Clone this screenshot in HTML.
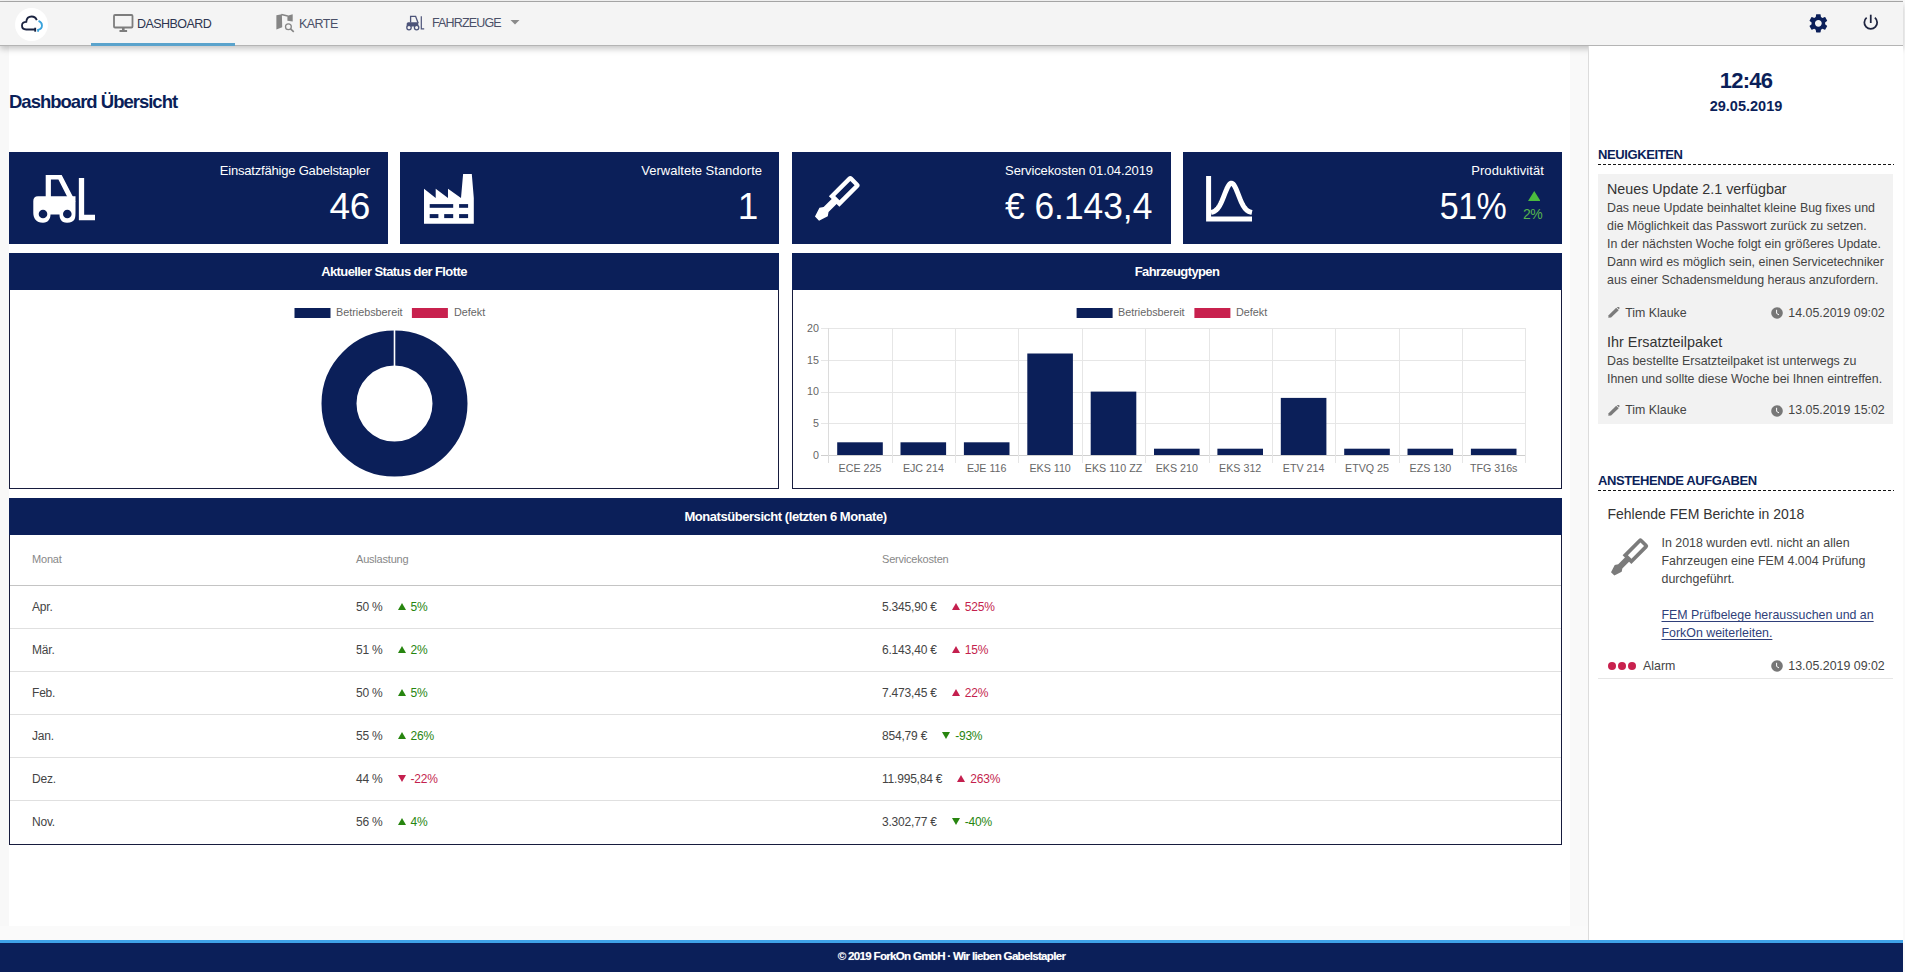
<!DOCTYPE html>
<html><head><meta charset="utf-8">
<style>
*{box-sizing:border-box;margin:0;padding:0}
html,body{width:1905px;height:972px;overflow:hidden;background:#f8f8f8;font-family:"Liberation Sans",sans-serif;position:relative}
.abs{position:absolute}
svg{display:block}
#topline{left:0;top:0;width:1905px;height:2px;background:#f2f2f2;border-bottom:1px solid #a9a9a9}
#nav{left:0;top:2px;width:1903px;height:44px;background:#f4f4f4;border-bottom:1px solid #b4b4b4;z-index:3;box-shadow:0 3px 6px rgba(0,0,0,.22)}
#main{left:9px;top:45px;width:1561px;height:881px;background:#fff}
#gutter{left:1570px;top:45px;width:18px;height:895px;background:#f9f9f9}
#side{left:1588px;top:46px;width:315px;height:894px;background:#fff;border-left:1px solid #dcdcdc;z-index:4}
#footer{left:0;top:940px;width:1903px;height:32px;background:#0b1f59;border-top:3px solid #3fa2e8;z-index:5;color:#fff;font-weight:bold;font-size:11.6px;letter-spacing:-0.72px;text-align:center;line-height:26px;text-shadow:0 0 1px rgba(255,255,255,.4)}
.navtxt{position:absolute;font-size:12.5px;color:#2d3550;letter-spacing:-0.55px;white-space:nowrap;top:14px;line-height:16px}
.kpi{position:absolute;top:152px;height:92px;width:379px;background:#0b1f59;color:#fff}
.kpi .lbl{position:absolute;right:18px;top:11px;font-size:13px;letter-spacing:-0.2px;white-space:nowrap;line-height:16px}
.kpi .val{position:absolute;right:18px;top:35px;font-size:37px;white-space:nowrap;line-height:40px;letter-spacing:-0.3px}
.kpi svg{position:absolute}
.panel{position:absolute;border:1px solid #171c3e;background:#fff}
.phead{position:absolute;left:-1px;top:-1px;right:-1px;height:37px;background:#0b1f59;color:#fff;font-weight:bold;font-size:13px;letter-spacing:-0.6px;text-align:center;line-height:37px;white-space:nowrap}
.row{position:absolute;left:0;width:100%;height:43px;border-top:1px solid #e0e0e0}
.cell{position:absolute;font-size:12px;color:#444;white-space:nowrap;line-height:14px;top:14px;letter-spacing:-0.2px}
.tri{display:inline-block;width:0;height:0;border-left:4px solid transparent;border-right:4px solid transparent;vertical-align:1px;margin-right:5px}
.tri.u{border-bottom:7px solid currentColor}
.tri.d{border-top:7px solid currentColor}
.hd{font-size:11px;color:#888}
.gap{display:inline-block;width:15px}
.up{color:#27850f}
.dn{color:#c41f4e}
.sh{position:absolute;left:9px;width:296px;font-weight:bold;font-size:13px;color:#0b1f59;letter-spacing:-0.4px;line-height:16px}
.dash{position:absolute;left:9px;width:296px;height:1px;background:repeating-linear-gradient(90deg,#151515 0 3px,transparent 3px 5px)}
.st{position:absolute;white-space:nowrap;color:#333}
</style></head>
<body>
<div id="topline" class="abs"></div>
<div id="nav" class="abs">
  <!-- logo -->
  <div class="abs" style="left:15px;top:6px;width:33px;height:33px;border-radius:50%;background:#fff"></div>
  <svg class="abs" style="left:19px;top:10px" width="28" height="26" viewBox="0 0 28 26"><g transform="translate(0.5,-0.2) scale(1.075)">
    <path d="M14.5 16.5 H6.2 C3.2 16.5 2.3 14.6 2.3 12.8 C2.3 10.6 4 9.3 6.3 9.3 C6.6 5.8 9 4.4 11.3 4.4 C13.6 4.4 15.3 5.8 16.1 7.7" fill="none" stroke="#1b2340" stroke-width="1.7"/>
    <path d="M14.6 14.8 V18.5" stroke="#1b2340" stroke-width="1.7"/>
    <path d="M17.7 8.5 C20.2 9.5 20.9 11.2 20.9 12.7 C20.9 14.6 19.7 16.3 17.3 16.8 V18.5" fill="none" stroke="#3aa3dc" stroke-width="1.7"/></g>
  </svg>
  <!-- dashboard tab -->
  <svg class="abs" style="left:113px;top:12px" width="21" height="19" viewBox="0 0 21 19">
    <rect x="1" y="1" width="18.5" height="12.5" rx="1" fill="none" stroke="#7d7d7d" stroke-width="1.8"/>
    <rect x="9" y="13.5" width="2.6" height="3" fill="#7d7d7d"/>
    <rect x="6.5" y="16" width="7.6" height="2" fill="#7d7d7d"/>
  </svg>
  <div class="navtxt" style="left:137px">DASHBOARD</div>
  <div class="abs" style="left:91px;top:41px;width:144px;height:3px;background:#5aa3cc"></div>
  <!-- karte -->
  <svg class="abs" style="left:272px;top:8px" width="26" height="26" viewBox="0 0 26 26">
    <path d="M4.4 5.2 L9.9 4.3 L10.2 17.2 L4.4 19.6 Z" fill="#858585"/>
    <path d="M9.4 4.5 L15.8 5.9" stroke="#858585" stroke-width="1.5"/>
    <path d="M15.4 5.8 L20.7 4.3 L20.7 11.6 L15.4 10.8 Z" fill="#858585"/>
    <circle cx="16.4" cy="16.7" r="2.9" fill="none" stroke="#858585" stroke-width="1.3"/>
    <path d="M18.5 18.9 L21.8 21.9" stroke="#858585" stroke-width="1.6"/>
  </svg>
  <div class="navtxt" style="left:299px;color:#4a5068">KARTE</div>
  <!-- fahrzeuge -->
  <svg class="abs" style="left:405px;top:11px" width="22" height="19" viewBox="0 0 22 19">
    <path d="M5.6 9.5 V3.3 H10.6 L13.1 10" fill="none" stroke="#4d5479" stroke-width="1.3"/>
    <path d="M3.3 9.2 H13.3 V13.4 H1.7 V10.8 Q1.7 9.2 3.3 9.2 Z" fill="#4d5479"/>
    <circle cx="4" cy="14.6" r="2.2" fill="#f4f4f4" stroke="#4d5479" stroke-width="1.3"/>
    <circle cx="11.6" cy="14.6" r="2.2" fill="#f4f4f4" stroke="#4d5479" stroke-width="1.3"/>
    <path d="M16.3 3.2 V15.8 H19.2" fill="none" stroke="#4d5479" stroke-width="1.2"/>
  </svg>
  <div class="navtxt" style="left:432px;color:#4a5068;letter-spacing:-0.85px;top:13px">FAHRZEUGE</div>
  <svg class="abs" style="left:510px;top:18px" width="10" height="5" viewBox="0 0 10 5"><path d="M0.5 0 H9.5 L5 4.5 Z" fill="#8a8a8a"/></svg>
  <!-- gear -->
  <svg class="abs" style="left:1807.2px;top:9.7px" width="22.7" height="22.7" viewBox="0 0 24 24">
    <path fill="#0b1f59" d="M19.14 12.94c.04-.3.06-.61.06-.94 0-.32-.02-.64-.07-.94l2.03-1.58c.18-.14.23-.41.12-.61l-1.92-3.32c-.12-.22-.37-.29-.59-.22l-2.39.96c-.5-.38-1.03-.7-1.62-.94l-.36-2.54c-.04-.24-.24-.41-.48-.41h-3.84c-.24 0-.43.17-.47.41l-.36 2.54c-.59.24-1.13.57-1.62.94l-2.39-.96c-.22-.08-.47 0-.59.22L2.74 8.87c-.12.21-.08.47.12.61l2.03 1.58c-.05.3-.09.63-.09.94s.02.64.07.94l-2.03 1.58c-.18.14-.23.41-.12.61l1.92 3.32c.12.22.37.29.59.22l2.39-.96c.5.38 1.03.7 1.62.94l.36 2.54c.05.24.24.41.48.41h3.84c.24 0 .44-.17.47-.41l.36-2.54c.59-.24 1.13-.56 1.62-.94l2.39.96c.22.08.47 0 .59-.22l1.92-3.32c.12-.22.07-.47-.12-.61l-2.01-1.58zM12 15.6c-1.98 0-3.6-1.62-3.6-3.6s1.62-3.6 3.6-3.6 3.6 1.62 3.6 3.6-1.62 3.6-3.6 3.6z"/>
  </svg>
  <!-- power -->
  <svg class="abs" style="left:1861px;top:11px" width="19" height="19" viewBox="0 0 19 19">
    <path d="M5.64 4.65 A6.4 6.4 0 1 0 13.86 4.65" fill="none" stroke="#1e2440" stroke-width="1.75"/>
    <path d="M9.75 1.7 V10" stroke="#1e2440" stroke-width="1.75"/>
  </svg>
</div>
<div id="main" class="abs"></div>
<div id="gutter" class="abs"></div>
<div class="abs" style="left:0;top:926px;width:1588px;height:14px;background:#fafafa"></div>
<div class="abs" style="left:1903px;top:0;width:2px;height:972px;background:#fafafa"></div>

<!-- Title -->
<div class="abs" style="left:9px;top:92px;font-size:18.5px;font-weight:bold;color:#0b1f59;letter-spacing:-1px;white-space:nowrap;line-height:20px">Dashboard Übersicht</div>

<!-- KPI cards -->
<div class="kpi" style="left:9px">
  <svg style="left:24px;top:23px" width="64" height="50" viewBox="0 0 64 50">
    <path d="M12.7 24 V0 H28.7 L42.5 26.7 H36.8 L25.4 4.5 H17.9 V24 Z" fill="#fff"/>
    <path d="M5 21.2 H42.5 V36.5 C42.5 43 42.5 47.7 34 47.7 C28 47.7 26.5 43.5 26.5 39.5 H17.5 C17.5 43.5 15.5 47.7 10 47.7 C3 47.7 0.3 43 0.3 38 V26 C0.3 23 2 21.2 5 21.2 Z" fill="#fff"/>
    <circle cx="10" cy="39" r="4.3" fill="#0b1f59"/>
    <circle cx="34.3" cy="39" r="4.3" fill="#0b1f59"/>
    <path d="M48.5 3 V42.5 H62" fill="none" stroke="#fff" stroke-width="5.3"/>
  </svg>
  <div class="lbl">Einsatzfähige Gabelstapler</div>
  <div class="val">46</div>
</div>
<div class="kpi" style="left:400px">
  <svg style="left:24px;top:22px" width="52" height="52" viewBox="0 0 52 52">
    <path d="M0 14.7 L11.7 24 V14.7 L24 24 V14.7 L37 24 L39.1 0 H47.8 L49.8 24 V49.8 H0 Z" fill="#fff"/>
    <rect x="5.7" y="30.1" width="23.5" height="3.7" fill="#0b1f59"/>
    <rect x="35.1" y="30.1" width="9" height="3.7" fill="#0b1f59"/>
    <rect x="5.7" y="40.1" width="8.7" height="4" fill="#0b1f59"/>
    <rect x="20.2" y="40.1" width="9" height="4" fill="#0b1f59"/>
    <rect x="35.1" y="40.1" width="9" height="4" fill="#0b1f59"/>
  </svg>
  <div class="lbl" style="letter-spacing:0px;right:17px">Verwaltete Standorte</div>
  <div class="val" style="right:21px">1</div>
</div>
<div class="kpi" style="left:792px">
  <svg style="left:21px;top:22px" width="50" height="50" viewBox="0 0 50 50">
    <g transform="translate(4,44.6) rotate(-45) scale(1.2)"><path fill-rule="evenodd" d="M0 -2.4 L7.8 -4.9 L10.7 -2.9 L20.2 -2.9 L20.2 -6.2 L42.8 -6.2 Q45.4 -6.2 45.4 -3.6 L45.4 3.6 Q45.4 6.2 42.8 6.2 L20.2 6.2 L20.2 2.9 L10.7 2.9 L7.8 4.9 L0 2.4 Z M24 -2.5 V2.5 H41.8 V-2.5 Z" fill="#fff"/></g>
  </svg>
  <div class="lbl" style="letter-spacing:-0.1px">Servicekosten 01.04.2019</div>
  <div class="val" style="right:19px;letter-spacing:0px;transform:scaleX(.955);transform-origin:100% 50%">€ 6.143,4</div>
</div>
<div class="kpi" style="left:1183px">
  <svg style="left:20px;top:22px" width="52" height="52" viewBox="0 0 52 52">
    <path d="M5.6 2 V45 H49" fill="none" stroke="#fff" stroke-width="5"/>
    <path d="M8.00 38.38 L8.68 38.24 L9.37 38.07 L10.05 37.85 L10.73 37.57 L11.42 37.24 L12.10 36.83 L12.78 36.34 L13.47 35.76 L14.15 35.07 L14.83 34.27 L15.52 33.36 L16.20 32.32 L16.88 31.15 L17.57 29.86 L18.25 28.45 L18.93 26.94 L19.62 25.33 L20.30 23.65 L20.98 21.91 L21.67 20.16 L22.35 18.43 L23.03 16.74 L23.72 15.14 L24.40 13.66 L25.08 12.34 L25.77 11.22 L26.45 10.33 L27.13 9.68 L27.82 9.30 L28.50 9.20 L29.18 9.38 L29.87 9.84 L30.55 10.56 L31.23 11.53 L31.92 12.71 L32.60 14.08 L33.28 15.59 L33.97 17.22 L34.65 18.93 L35.33 20.68 L36.02 22.42 L36.70 24.14 L37.38 25.81 L38.07 27.39 L38.75 28.88 L39.43 30.25 L40.12 31.51 L40.80 32.64 L41.48 33.64 L42.17 34.52 L42.85 35.28 L43.53 35.94 L44.22 36.50 L44.90 36.96 L45.58 37.35 L46.27 37.66 L46.95 37.92 L47.63 38.12 L48.32 38.28 L49.00 38.41" fill="none" stroke="#fff" stroke-width="5" stroke-linejoin="round"/>
  </svg>
  <div class="lbl" style="letter-spacing:0.1px">Produktivität</div>
  <div class="val" style="right:56px;top:35px;letter-spacing:-0.6px;transform:scaleX(.92);transform-origin:100% 50%">51%</div>
  <svg style="left:344.5px;top:39px" width="12.5" height="10" viewBox="0 0 12.5 10"><path d="M0 10 L6.25 0 L12.5 10 Z" fill="#4cbb3f"/></svg>
  <div class="abs" style="left:340px;top:53.5px;font-size:14px;color:#55b34d;line-height:16px;letter-spacing:-0.6px">2%</div>
</div>

<!-- Donut panel -->
<div class="panel" style="left:9px;top:253px;width:770px;height:236px">
  <div class="phead">Aktueller Status der Flotte</div>
  <svg class="abs" style="left:-1px;top:-1px" width="770" height="236" viewBox="0 0 770 236">
    <rect x="285.5" y="55" width="36" height="10" fill="#0b1f59"/>
    <text x="327" y="62.5" font-size="10.8" fill="#666">Betriebsbereit</text>
    <rect x="402.9" y="55" width="36" height="10" fill="#c8214e"/>
    <text x="445" y="62.5" font-size="10.8" fill="#666">Defekt</text>
    <circle cx="385.5" cy="150.6" r="55.5" fill="none" stroke="#0b1f59" stroke-width="35"/>
    <line x1="385.5" y1="76.5" x2="385.5" y2="113" stroke="#fff" stroke-width="1.6"/>
  </svg>
</div>

<!-- Bar panel -->
<div class="panel" style="left:792px;top:253px;width:770px;height:236px">
  <div class="phead">Fahrzeugtypen</div>
  <svg class="abs" style="left:-1px;top:-1px" width="770" height="236" viewBox="0 0 770 236" id="bars">
    <rect x="284.6" y="55" width="36" height="10" fill="#0b1f59"/>
    <text x="326.0" y="62.5" font-size="10.8" fill="#666">Betriebsbereit</text>
    <rect x="402.4" y="55" width="36" height="10" fill="#c8214e"/>
    <text x="444.0" y="62.5" font-size="10.8" fill="#666">Defekt</text>
    <line x1="29" y1="75.5" x2="733.4" y2="75.5" stroke="#e6e6e6" stroke-width="1"/>
    <text x="27" y="78.9" font-size="10.7" fill="#666" text-anchor="end">20</text>
    <line x1="29" y1="107.5" x2="733.4" y2="107.5" stroke="#e6e6e6" stroke-width="1"/>
    <text x="27" y="110.6" font-size="10.7" fill="#666" text-anchor="end">15</text>
    <line x1="29" y1="139.5" x2="733.4" y2="139.5" stroke="#e6e6e6" stroke-width="1"/>
    <text x="27" y="142.4" font-size="10.7" fill="#666" text-anchor="end">10</text>
    <line x1="29" y1="170.5" x2="733.4" y2="170.5" stroke="#e6e6e6" stroke-width="1"/>
    <text x="27" y="174.1" font-size="10.7" fill="#666" text-anchor="end">5</text>
    <line x1="29" y1="202.5" x2="733.4" y2="202.5" stroke="#cfcfcf" stroke-width="1"/>
    <text x="27" y="205.8" font-size="10.7" fill="#666" text-anchor="end">0</text>
    <line x1="36.5" y1="75.1" x2="36.5" y2="210" stroke="#dcdcdc" stroke-width="1"/>
    <line x1="100.5" y1="75.1" x2="100.5" y2="210" stroke="#e6e6e6" stroke-width="1"/>
    <line x1="163.5" y1="75.1" x2="163.5" y2="210" stroke="#e6e6e6" stroke-width="1"/>
    <line x1="226.5" y1="75.1" x2="226.5" y2="210" stroke="#e6e6e6" stroke-width="1"/>
    <line x1="290.5" y1="75.1" x2="290.5" y2="210" stroke="#e6e6e6" stroke-width="1"/>
    <line x1="353.5" y1="75.1" x2="353.5" y2="210" stroke="#e6e6e6" stroke-width="1"/>
    <line x1="417.5" y1="75.1" x2="417.5" y2="210" stroke="#e6e6e6" stroke-width="1"/>
    <line x1="480.5" y1="75.1" x2="480.5" y2="210" stroke="#e6e6e6" stroke-width="1"/>
    <line x1="543.5" y1="75.1" x2="543.5" y2="210" stroke="#e6e6e6" stroke-width="1"/>
    <line x1="607.5" y1="75.1" x2="607.5" y2="210" stroke="#e6e6e6" stroke-width="1"/>
    <line x1="670.5" y1="75.1" x2="670.5" y2="210" stroke="#e6e6e6" stroke-width="1"/>
    <line x1="733.5" y1="75.1" x2="733.5" y2="210" stroke="#e6e6e6" stroke-width="1"/>
    <rect x="45.2" y="189.3" width="45.6" height="12.7" fill="#0b1f59"/>
    <text x="68.0" y="218.8" font-size="10.7" fill="#666" text-anchor="middle">ECE 225</text>
    <rect x="108.5" y="189.3" width="45.6" height="12.7" fill="#0b1f59"/>
    <text x="131.4" y="218.8" font-size="10.7" fill="#666" text-anchor="middle">EJC 214</text>
    <rect x="171.9" y="189.3" width="45.6" height="12.7" fill="#0b1f59"/>
    <text x="194.7" y="218.8" font-size="10.7" fill="#666" text-anchor="middle">EJE 116</text>
    <rect x="235.3" y="100.5" width="45.6" height="101.5" fill="#0b1f59"/>
    <text x="258.1" y="218.8" font-size="10.7" fill="#666" text-anchor="middle">EKS 110</text>
    <rect x="298.7" y="138.6" width="45.6" height="63.4" fill="#0b1f59"/>
    <text x="321.5" y="218.8" font-size="10.7" fill="#666" text-anchor="middle">EKS 110 ZZ</text>
    <rect x="362.0" y="195.7" width="45.6" height="6.3" fill="#0b1f59"/>
    <text x="384.8" y="218.8" font-size="10.7" fill="#666" text-anchor="middle">EKS 210</text>
    <rect x="425.4" y="195.7" width="45.6" height="6.3" fill="#0b1f59"/>
    <text x="448.2" y="218.8" font-size="10.7" fill="#666" text-anchor="middle">EKS 312</text>
    <rect x="488.8" y="144.9" width="45.6" height="57.1" fill="#0b1f59"/>
    <text x="511.6" y="218.8" font-size="10.7" fill="#666" text-anchor="middle">ETV 214</text>
    <rect x="552.2" y="195.7" width="45.6" height="6.3" fill="#0b1f59"/>
    <text x="575.0" y="218.8" font-size="10.7" fill="#666" text-anchor="middle">ETVQ 25</text>
    <rect x="615.5" y="195.7" width="45.6" height="6.3" fill="#0b1f59"/>
    <text x="638.3" y="218.8" font-size="10.7" fill="#666" text-anchor="middle">EZS 130</text>
    <rect x="678.9" y="195.7" width="45.6" height="6.3" fill="#0b1f59"/>
    <text x="701.7" y="218.8" font-size="10.7" fill="#666" text-anchor="middle">TFG 316s</text>
  </svg>
</div>

<!-- Table panel -->
<div class="panel" style="left:9px;top:498px;width:1553px;height:347px">
  <div class="phead" style="letter-spacing:-0.45px">Monatsübersicht (letzten 6 Monate)</div>
  <div id="tbody">
  <div class="cell hd" style="left:22px;top:53px">Monat</div>
  <div class="cell hd" style="left:346px;top:53px">Auslastung</div>
  <div class="cell hd" style="left:872px;top:53px">Servicekosten</div>
  <div class="abs" style="left:0;top:86px;width:1551px;height:1px;background:#c4c4c4"></div>
  <div class="cell" style="left:22px;top:101px">Apr.</div>
  <div class="cell" style="left:346px;top:101px">50 %<span class="gap"></span><span class="up"><i class="tri u"></i>5%</span></div>
  <div class="cell" style="left:872px;top:101px">5.345,90 €<span class="gap"></span><span class="dn"><i class="tri u"></i>525%</span></div>
  <div class="abs" style="left:0;top:129px;width:1551px;height:1px;background:#e0e0e0"></div>
  <div class="cell" style="left:22px;top:144px">Mär.</div>
  <div class="cell" style="left:346px;top:144px">51 %<span class="gap"></span><span class="up"><i class="tri u"></i>2%</span></div>
  <div class="cell" style="left:872px;top:144px">6.143,40 €<span class="gap"></span><span class="dn"><i class="tri u"></i>15%</span></div>
  <div class="abs" style="left:0;top:172px;width:1551px;height:1px;background:#e0e0e0"></div>
  <div class="cell" style="left:22px;top:187px">Feb.</div>
  <div class="cell" style="left:346px;top:187px">50 %<span class="gap"></span><span class="up"><i class="tri u"></i>5%</span></div>
  <div class="cell" style="left:872px;top:187px">7.473,45 €<span class="gap"></span><span class="dn"><i class="tri u"></i>22%</span></div>
  <div class="abs" style="left:0;top:215px;width:1551px;height:1px;background:#e0e0e0"></div>
  <div class="cell" style="left:22px;top:230px">Jan.</div>
  <div class="cell" style="left:346px;top:230px">55 %<span class="gap"></span><span class="up"><i class="tri u"></i>26%</span></div>
  <div class="cell" style="left:872px;top:230px">854,79 €<span class="gap"></span><span class="up"><i class="tri d"></i>-93%</span></div>
  <div class="abs" style="left:0;top:258px;width:1551px;height:1px;background:#e0e0e0"></div>
  <div class="cell" style="left:22px;top:273px">Dez.</div>
  <div class="cell" style="left:346px;top:273px">44 %<span class="gap"></span><span class="dn"><i class="tri d"></i>-22%</span></div>
  <div class="cell" style="left:872px;top:273px">11.995,84 €<span class="gap"></span><span class="dn"><i class="tri u"></i>263%</span></div>
  <div class="abs" style="left:0;top:301px;width:1551px;height:1px;background:#e0e0e0"></div>
  <div class="cell" style="left:22px;top:316px">Nov.</div>
  <div class="cell" style="left:346px;top:316px">56 %<span class="gap"></span><span class="up"><i class="tri u"></i>4%</span></div>
  <div class="cell" style="left:872px;top:316px">3.302,77 €<span class="gap"></span><span class="up"><i class="tri d"></i>-40%</span></div>
  </div>
</div>

<div id="side" class="abs">
  <div class="abs" style="left:0;top:23px;width:314px;text-align:center;font-weight:bold;font-size:22px;color:#0b1f59;line-height:24px;letter-spacing:-0.8px">12:46</div>
  <div class="abs" style="left:0;top:52px;width:314px;text-align:center;font-weight:bold;font-size:14.5px;color:#0b1f59;line-height:16px;letter-spacing:0px">29.05.2019</div>
  <div class="sh" style="top:101px">NEUIGKEITEN</div>
  <div class="dash" style="top:118px"></div>
  <div id="news">
  <div class="abs" style="left:9px;top:128px;width:295px;height:250px;background:#f2f2f2"></div>
  <div class="st" style="left:18.0px;top:133.6px;font-size:14.3px;line-height:18px;color:#333;letter-spacing:0px;font-weight:normal;">Neues Update 2.1 verfügbar</div>
  <div class="st" style="left:18.0px;top:153.3px;font-size:12.4px;line-height:18px;color:#444;letter-spacing:0px;font-weight:normal;">Das neue Update beinhaltet kleine Bug fixes und</div>
  <div class="st" style="left:18.0px;top:171.3px;font-size:12.4px;line-height:18px;color:#444;letter-spacing:0px;font-weight:normal;">die Möglichkeit das Passwort zurück zu setzen.</div>
  <div class="st" style="left:18.0px;top:189.2px;font-size:12.4px;line-height:18px;color:#444;letter-spacing:0px;font-weight:normal;">In der nächsten Woche folgt ein größeres Update.</div>
  <div class="st" style="left:18.0px;top:207.2px;font-size:12.4px;line-height:18px;color:#444;letter-spacing:0px;font-weight:normal;">Dann wird es möglich sein, einen Servicetechniker</div>
  <div class="st" style="left:18.0px;top:225.1px;font-size:12.4px;line-height:18px;color:#444;letter-spacing:0px;font-weight:normal;">aus einer Schadensmeldung heraus anzufordern.</div>
  <svg class="abs" style="left:19.3px;top:261.2px" width="12" height="11" viewBox="0 0 12 11"><path d="M0.3 10.7 L0.6 8.3 L8.2 0.8 L10.7 3.2 L3.1 10.5 Z" fill="#7b7b7b"/><path d="M8.9 0.3 L9.6 -0.3 Q10.1 -0.6 10.6 -0.2 L11.4 0.6 Q11.8 1.1 11.4 1.6 L10.9 2.4 Z" fill="#7b7b7b"/></svg>
  <div class="st" style="left:36.2px;top:257.5px;font-size:12.4px;line-height:18px;color:#444;letter-spacing:0px;font-weight:normal;">Tim Klauke</div>
  <svg class="abs" style="left:181.7px;top:260.7px" width="12" height="12" viewBox="0 0 12 12"><circle cx="6" cy="6" r="5.8" fill="#777"/><path d="M5.6 2.8 V6.4 L8 7.9" fill="none" stroke="#fff" stroke-width="1"/></svg>
  <div class="st" style="left:199.3px;top:257.5px;font-size:12.4px;line-height:18px;color:#444;letter-spacing:0px;font-weight:normal;">14.05.2019 09:02</div>
  <div class="st" style="left:18.0px;top:286.6px;font-size:14.4px;line-height:18px;color:#333;letter-spacing:0px;font-weight:normal;">Ihr Ersatzteilpaket</div>
  <div class="st" style="left:18.0px;top:306.2px;font-size:12.4px;line-height:18px;color:#444;letter-spacing:0px;font-weight:normal;">Das bestellte Ersatzteilpaket ist unterwegs zu</div>
  <div class="st" style="left:18.0px;top:324.2px;font-size:12.4px;line-height:18px;color:#444;letter-spacing:0px;font-weight:normal;">Ihnen und sollte diese Woche bei Ihnen eintreffen.</div>
  <svg class="abs" style="left:19.3px;top:359.1px" width="12" height="11" viewBox="0 0 12 11"><path d="M0.3 10.7 L0.6 8.3 L8.2 0.8 L10.7 3.2 L3.1 10.5 Z" fill="#7b7b7b"/><path d="M8.9 0.3 L9.6 -0.3 Q10.1 -0.6 10.6 -0.2 L11.4 0.6 Q11.8 1.1 11.4 1.6 L10.9 2.4 Z" fill="#7b7b7b"/></svg>
  <div class="st" style="left:36.2px;top:355.4px;font-size:12.4px;line-height:18px;color:#444;letter-spacing:0px;font-weight:normal;">Tim Klauke</div>
  <svg class="abs" style="left:181.7px;top:358.6px" width="12" height="12" viewBox="0 0 12 12"><circle cx="6" cy="6" r="5.8" fill="#777"/><path d="M5.6 2.8 V6.4 L8 7.9" fill="none" stroke="#fff" stroke-width="1"/></svg>
  <div class="st" style="left:199.3px;top:355.4px;font-size:12.4px;line-height:18px;color:#444;letter-spacing:0px;font-weight:normal;">13.05.2019 15:02</div>
  </div>
  <div class="sh" style="top:427px">ANSTEHENDE AUFGABEN</div>
  <div class="dash" style="top:444px"></div>
  <div id="tasks">
  <div class="st" style="left:18.5px;top:459.0px;font-size:14px;line-height:18px;color:#333;letter-spacing:0px;font-weight:normal;">Fehlende FEM Berichte in 2018</div>
  <svg class="abs" style="left:17px;top:488px" width="46" height="46" viewBox="0 0 46 46"><g transform="translate(6.7,39.9) rotate(-45)"><path fill-rule="evenodd" d="M0 -2.4 L7.8 -4.9 L10.7 -2.9 L20.2 -2.9 L20.2 -6.2 L42.8 -6.2 Q45.4 -6.2 45.4 -3.6 L45.4 3.6 Q45.4 6.2 42.8 6.2 L20.2 6.2 L20.2 2.9 L10.7 2.9 L7.8 4.9 L0 2.4 Z M24 -2.5 V2.5 H41.8 V-2.5 Z" fill="#7b7b7b"/></g></svg>
  <div class="st" style="left:72.5px;top:487.9px;font-size:12.4px;line-height:18px;color:#444;letter-spacing:0px;font-weight:normal;">In 2018 wurden evtl. nicht an allen</div>
  <div class="st" style="left:72.5px;top:505.9px;font-size:12.4px;line-height:18px;color:#444;letter-spacing:0px;font-weight:normal;">Fahrzeugen eine FEM 4.004 Prüfung</div>
  <div class="st" style="left:72.5px;top:523.9px;font-size:12.4px;line-height:18px;color:#444;letter-spacing:0px;font-weight:normal;">durchgeführt.</div>
  <div class="st" style="left:72.5px;top:560.0px;font-size:12.4px;line-height:18px;color:#2f3f7a;letter-spacing:0px;font-weight:normal;text-decoration:underline;text-underline-offset:1.5px;text-decoration-skip-ink:none">FEM Prüfbelege heraussuchen und an</div>
  <div class="st" style="left:72.5px;top:578.0px;font-size:12.4px;line-height:18px;color:#2f3f7a;letter-spacing:0px;font-weight:normal;text-decoration:underline;text-underline-offset:1.5px;text-decoration-skip-ink:none">ForkOn weiterleiten.</div>
  <div class="abs" style="left:18.5px;top:615.5px;width:8.5px;height:8.5px;border-radius:50%;background:#c8214e"></div>
  <div class="abs" style="left:28.5px;top:615.5px;width:8.5px;height:8.5px;border-radius:50%;background:#c8214e"></div>
  <div class="abs" style="left:38.5px;top:615.5px;width:8.5px;height:8.5px;border-radius:50%;background:#c8214e"></div>
  <div class="st" style="left:54.0px;top:610.9px;font-size:12.4px;line-height:18px;color:#444;letter-spacing:0px;font-weight:normal;">Alarm</div>
  <svg class="abs" style="left:181.7px;top:613.5px" width="12" height="12" viewBox="0 0 12 12"><circle cx="6" cy="6" r="5.8" fill="#777"/><path d="M5.6 2.8 V6.4 L8 7.9" fill="none" stroke="#fff" stroke-width="1"/></svg>
  <div class="st" style="left:199.3px;top:610.9px;font-size:12.4px;line-height:18px;color:#444;letter-spacing:0px;font-weight:normal;">13.05.2019 09:02</div>
  <div class="abs" style="left:9px;top:632px;width:295px;height:1px;background:#e6e6e6"></div>
  </div>
</div>
<div id="footer" class="abs">© 2019 ForkOn GmbH · Wir lieben Gabelstapler</div>
</body></html>
